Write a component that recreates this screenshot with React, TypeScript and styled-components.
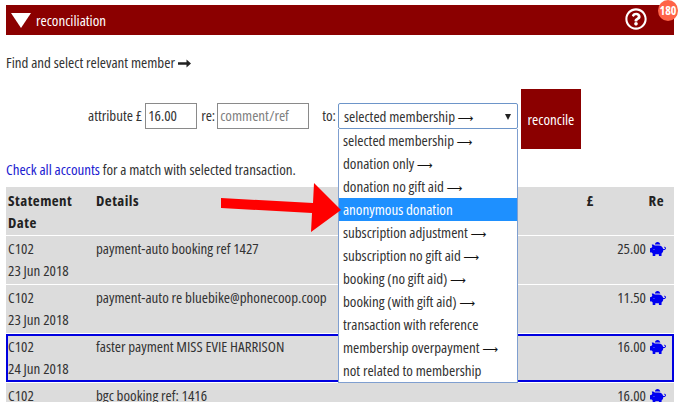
import React from 'react';
import styled, { createGlobalStyle } from 'styled-components';
import { FaPiggyBank, FaRegQuestionCircle } from 'react-icons/fa';

const GlobalStyle = createGlobalStyle`
  html, body {
    margin: 0;
    padding: 0;
    background: #fff;
    overflow: hidden;
  }
  body {
    font-family: "Open Sans", "Liberation Sans", sans-serif;
    font-stretch: 75%;
    font-size: 15px;
    line-height: 22px;
    color: #333;
  }
`;

const Page = styled.div`
  width: 679px;
  height: 402px;
  padding: 5px 5px 0 6px;
  box-sizing: border-box;
  position: relative;
  overflow: hidden;
`;

const TitleBar = styled.header`
  height: 30px;
  background: #8b0000;
  color: #fff;
  display: flex;
  align-items: center;
  padding: 0 5px;
  position: relative;
`;

const Triangle = styled.span`
  width: 0;
  height: 0;
  border-left: 10px solid transparent;
  border-right: 10px solid transparent;
  border-top: 15px solid #fff;
  margin-right: 5px;
`;

const HelpIcon = styled(FaRegQuestionCircle)`
  position: absolute;
  top: 3px;
  right: 27px;
  font-size: 22px;
`;

const Badge = styled.span`
  position: absolute;
  top: -5px;
  right: -4px;
  width: 20px;
  height: 21px;
  border-radius: 50%;
  background: #ff6347;
  color: #fff;
  font-size: 12px;
  font-weight: 700;
  line-height: 21px;
  text-align: center;
`;

const Intro = styled.p`
  margin: 16px 0 0;
`;

const HeavyArrow = styled.svg`
  margin-left: 3px;
  vertical-align: 0;
`;

const Reconcile = styled.form`
  display: flex;
  align-items: flex-start;
  height: 60px;
  margin-top: 16px;
  padding-left: 82px;
`;

const Label = styled.label<{ $gap: number; $after: number }>`
  margin-top: 15px;
  margin-left: ${(props) => props.$gap}px;
  margin-right: ${(props) => props.$after}px;
`;

const TextField = styled.span<{ $width: number; $placeholder?: boolean }>`
  width: ${(props) => props.$width}px;
  height: 26px;
  margin-top: 14px;
  box-sizing: border-box;
  border: 1px solid #8a8a8a;
  padding: 0 2px;
  line-height: 23px;
  color: ${(props) => (props.$placeholder ? '#808080' : '#333')};
`;

const SelectWrap = styled.div`
  position: relative;
  margin-top: 14px;
  z-index: 2;
`;

const SelectBox = styled.div`
  width: 180px;
  height: 26px;
  box-sizing: border-box;
  border: 1px solid #6d95c9;
  border-radius: 2px;
  padding: 0 5px;
  line-height: 24px;
  position: relative;
  background: #fff;
`;

const Caret = styled.span`
  position: absolute;
  top: 10px;
  right: 6px;
  width: 0;
  height: 0;
  border-left: 3px solid transparent;
  border-right: 3px solid transparent;
  border-top: 6px solid #222;
`;

const OptionList = styled.ul`
  position: absolute;
  top: 26px;
  left: 0;
  width: 180px;
  box-sizing: border-box;
  margin: 0;
  padding: 0;
  list-style: none;
  background: #fff;
  border: 1px solid #7f9fd0;
  border-top: 0;
`;

const Option = styled.li<{ $active?: boolean }>`
  height: 23px;
  line-height: 22px;
  padding: 0 4px;
  white-space: nowrap;
  background: ${(props) => (props.$active ? '#1e90ff' : 'transparent')};
  color: ${(props) => (props.$active ? '#fff' : '#333')};
`;

const ArrowGlyph = styled.span`
  font-family: "DejaVu Sans", sans-serif;
  font-stretch: normal;
  font-size: 11px;
  color: #111;
`;

const ReconcileButton = styled.button`
  width: 60px;
  height: 60px;
  margin-left: 3px;
  border: 0;
  padding: 0;
  background: #8b0000;
  color: #fff;
  font: inherit;
`;

const Hint = styled.p`
  margin: 9px 0 0;
  a {
    color: #2020d0;
    text-decoration: none;
  }
`;

const Table = styled.table`
  width: 668px;
  margin-top: 7px;
  border-collapse: separate;
  border-spacing: 0;
  table-layout: fixed;
`;

const HeadCell = styled.th<{ $align?: string; $width: number; $right?: number }>`
  width: ${(props) => props.$width}px;
  box-sizing: border-box;
  height: 48px;
  background: #dcdcdc;
  padding: 2px ${(props) => props.$right ?? 2}px 2px 2px;
  vertical-align: top;
  font-weight: 700;
  letter-spacing: 0.45px;
  color: #222;
  text-align: ${(props) => props.$align ?? 'left'};
  border-bottom: 1px solid #fff;
`;

const BLUE = '#0000e0';

const Row = styled.tr<{ $selected?: boolean }>`
  td {
    box-sizing: border-box;
    height: 49px;
    background: #dcdcdc;
    padding: 1px 2px;
    vertical-align: top;
    border-bottom: 1px solid #fff;
    box-shadow: ${(props) =>
      props.$selected ? `inset 0 2px ${BLUE}, inset 0 -2px ${BLUE}` : 'none'};
  }
  td:first-child {
    box-shadow: ${(props) =>
      props.$selected ? `inset 2px 0 ${BLUE}, inset 0 2px ${BLUE}, inset 0 -2px ${BLUE}` : 'none'};
  }
  td:last-child {
    box-shadow: ${(props) =>
      props.$selected ? `inset -2px 0 ${BLUE}, inset 0 2px ${BLUE}, inset 0 -2px ${BLUE}` : 'none'};
  }
`;

const AmountCell = styled.td`
  text-align: right;
  white-space: nowrap;
  padding-right: 8px !important;
`;

const Piggy = styled(FaPiggyBank)`
  color: #0000f0;
  font-size: 16px;
  vertical-align: -3px;
  margin-left: 4px;
  transform: scaleX(-1);
`;

const PointerArrow = styled.svg`
  position: absolute;
  left: 221px;
  top: 183px;
  z-index: 3;
`;

const OPTIONS = [
  { label: 'selected membership', arrow: true },
  { label: 'donation only', arrow: true },
  { label: 'donation no gift aid', arrow: true },
  { label: 'anonymous donation' },
  { label: 'subscription adjustment', arrow: true },
  { label: 'subscription no gift aid', arrow: true },
  { label: 'booking (no gift aid)', arrow: true },
  { label: 'booking (with gift aid)', arrow: true },
  { label: 'transaction with reference' },
  { label: 'membership overpayment', arrow: true },
  { label: 'not related to membership' },
];

const ROWS = [
  { code: 'C102', date: '23 Jun 2018', details: 'payment-auto booking ref 1427', amount: '25.00' },
  { code: 'C102', date: '23 Jun 2018', details: 'payment-auto re bluebike@phonecoop.coop', amount: '11.50' },
  { code: 'C102', date: '24 Jun 2018', details: 'faster payment MISS EVIE HARRISON', amount: '16.00', selected: true },
  { code: 'C102', date: '24 Jun 2018', details: 'bgc booking ref: 1416', amount: '16.00' },
];

const App = () => (
  <Page>
    <GlobalStyle />
    <TitleBar>
      <Triangle />
      reconciliation
      <HelpIcon />
      <Badge>180</Badge>
    </TitleBar>
    <Intro>
      Find and select relevant member
      <HeavyArrow width="13" height="9" viewBox="0 0 13 9">
        <path d="M0 3.2h8.5V0.5L13 4.5 8.5 8.5V5.8H0z" fill="#222" />
      </HeavyArrow>
    </Intro>
    <Reconcile>
      <Label $gap={0} $after={3}>attribute £</Label>
      <TextField $width={52}>16.00</TextField>
      <Label $gap={4} $after={2}>re:</Label>
      <TextField $width={92} $placeholder>comment/ref</TextField>
      <Label $gap={13} $after={2}>to:</Label>
      <SelectWrap>
        <SelectBox>
          selected membership <ArrowGlyph>⟶</ArrowGlyph>
          <Caret />
        </SelectBox>
        <OptionList>
          {OPTIONS.map((option, i) => (
            <Option key={option.label} $active={i === 3}>
              {option.label}
              {option.arrow && <> <ArrowGlyph>⟶</ArrowGlyph></>}
            </Option>
          ))}
        </OptionList>
      </SelectWrap>
      <ReconcileButton type="button">reconcile</ReconcileButton>
    </Reconcile>
    <Hint>
      <a href="#accounts">Check all accounts</a> for a match with selected transaction.
    </Hint>
    <Table>
      <thead>
        <tr>
          <HeadCell $width={88}>Statement Date</HeadCell>
          <HeadCell $width={430}>Details</HeadCell>
          <HeadCell $width={72} $align="right">£</HeadCell>
          <HeadCell $width={78} $align="right" $right={10}>Re</HeadCell>
        </tr>
      </thead>
      <tbody>
        {ROWS.map((row) => (
          <Row key={row.details} $selected={row.selected}>
            <td>{row.code}<br />{row.date}</td>
            <td>{row.details}</td>
            <td />
            <AmountCell>{row.amount}<Piggy /></AmountCell>
          </Row>
        ))}
      </tbody>
    </Table>
    <PointerArrow width="122" height="52" viewBox="0 0 122 52">
      <polygon points="0,15 92,20 93,0 120,27 90,49 91,30 0,25" fill="#ff0000" />
    </PointerArrow>
  </Page>
);

export default App;
